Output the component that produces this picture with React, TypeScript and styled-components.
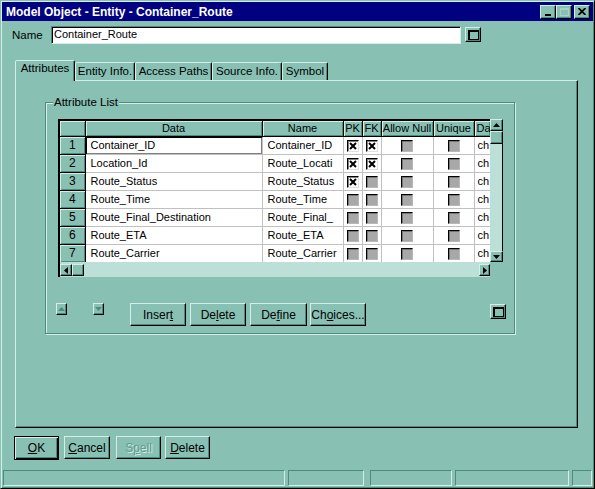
import React from "react";
import styled, { createGlobalStyle, css } from "styled-components";

const face = "#88c0b4";
const light = "#d4eee8";
const shadow = "#4e8a7e";
const dark = "#000";
const track = "#bcdfd7";
const gridLine = "#c0c0c0";

const GlobalStyle = createGlobalStyle`
  html, body { margin: 0; padding: 0; background: ${face}; }
  body {
    font-family: "Liberation Sans", Arial, sans-serif;
    font-size: 11px;
    color: #000;
  }
  * { box-sizing: border-box; }
`;

const raised = css`
  border: 1px solid;
  border-color: ${light} ${dark} ${dark} ${light};
  box-shadow: inset -1px -1px 0 ${shadow};
  background: ${face};
`;

const sunken = css`
  border: 1px solid;
  border-color: ${shadow} ${light} ${light} ${shadow};
  box-shadow: inset 1px 1px 0 ${dark};
`;

const Window = styled.div`
  width: 595px;
  height: 489px;
  border: 1px solid;
  border-color: ${face} ${dark} ${dark} ${face};
  box-shadow: inset 1px 1px 0 ${light}, inset -1px -1px 0 ${shadow};
  padding: 1px;
  display: flex;
  flex-direction: column;
  background: ${face};
`;

const TitleBar = styled.div`
  height: 19px;
  background: #000080;
  display: flex;
  align-items: center;
  padding: 0 3px 0 4px;
`;

const Title = styled.div`
  flex: 1;
  color: #fff;
  font-weight: bold;
  font-size: 12px;
`;

const Caption = styled.button<{ $disabled?: boolean; $gap?: boolean }>`
  ${raised};
  width: 16px;
  height: 14px;
  padding: 0;
  margin-left: ${(p) => (p.$gap ? "2px" : "0")};
  display: flex;
  align-items: center;
  justify-content: center;
`;

const NameRow = styled.div`
  height: 39px;
  display: flex;
  align-items: flex-start;
  padding: 5px 0 0 10px;
`;

const Label = styled.div`
  width: 39px;
  line-height: 18px;
  font-size: 11.5px;
`;

const TextInput = styled.div`
  ${sunken};
  width: 410px;
  height: 18px;
  background: #fff;
  padding-left: 2px;
  line-height: 15px;
`;

const BoxButton = styled.button<{ $left?: number; $top?: number }>`
  ${raised};
  width: 16px;
  height: 15px;
  padding: 0;
  margin-left: ${(p) => p.$left ?? 0}px;
  margin-top: ${(p) => p.$top ?? 0}px;
  display: flex;
  align-items: center;
  justify-content: center;
  &::after {
    content: "";
    width: 8px;
    height: 7px;
    border: 2px solid #000;
    border-right-width: 1px;
    border-bottom-width: 1px;
  }
`;

const TabStrip = styled.div`
  height: 20px;
  display: flex;
  align-items: flex-end;
  margin-left: 13px;
  position: relative;
  z-index: 1;
`;

const Tab = styled.div<{ $w: number; $active?: boolean }>`
  width: ${(p) => p.$w}px;
  height: ${(p) => (p.$active ? 21 : 18)}px;
  margin-bottom: ${(p) => (p.$active ? -1 : 0)}px;
  background: ${face};
  border: 1px solid;
  border-bottom: none;
  border-color: ${light} ${dark} transparent ${light};
  border-radius: 2px 2px 0 0;
  box-shadow: inset -1px 0 0 ${shadow};
  text-align: center;
  line-height: ${(p) => (p.$active ? 15 : 16)}px;
  font-size: 11.5px;
  white-space: nowrap;
`;

const Panel = styled.div`
  height: 348px;
  margin: 0 15px 0 13px;
  border: 1px solid;
  border-color: ${light} ${dark} ${dark} ${light};
  box-shadow: inset -1px -1px 0 ${shadow};
  padding: 15px 0 0 29px;
`;

const Group = styled.fieldset`
  width: 470px;
  margin: 0;
  padding: 10px 7px 7px 12px;
  border: 1px solid ${shadow};
  box-shadow: inset 1px 1px 0 ${light}, 1px 1px 0 ${light};
`;

const Legend = styled.legend`
  margin-left: -5px;
  padding: 0 1px;
  background: ${face};
  line-height: 13px;
  font-size: 11.5px;
`;

const GridFrame = styled.div`
  display: grid;
  grid-template-columns: 432px 13px;
  grid-template-rows: 143px 15px;
  width: 445px;
`;

const TableArea = styled.div`
  border-top: 2px solid ${dark};
  border-left: 2px solid ${dark};
  background: #fff;
  overflow: hidden;
`;

const Table = styled.table`
  border-collapse: collapse;
  table-layout: fixed;
  width: 430px;
`;

const Head = styled.th<{ $w: number; $left?: boolean }>`
  width: ${(p) => p.$w}px;
  height: 15px;
  padding: 0 0 0 ${(p) => (p.$left ? 2 : 0)}px;
  font-weight: normal;
  background: ${face};
  border-right: 1px solid ${dark};
  border-bottom: 1px solid ${dark};
  box-shadow: inset 1px 1px 0 ${light}, inset -1px -1px 0 ${shadow};
  text-align: ${(p) => (p.$left ? "left" : "center")};
  white-space: nowrap;
  overflow: hidden;
  line-height: 13px;
`;

const RowNum = styled.td`
  height: 18px;
  padding: 0;
  background: ${face};
  border-right: 1px solid ${dark};
  border-bottom: 1px solid ${dark};
  box-shadow: inset 1px 1px 0 ${light}, inset -1px -1px 0 ${shadow};
  text-align: center;
  font-size: 12px;
`;

const Cell = styled.td<{ $focus?: boolean; $center?: boolean; $pad?: number }>`
  height: 18px;
  padding: 0 0 0 ${(p) => (p.$center ? 0 : p.$pad ?? 5)}px;
  border-right: 1px solid ${gridLine};
  border-bottom: 1px solid ${gridLine};
  white-space: nowrap;
  overflow: hidden;
  text-align: ${(p) => (p.$center ? "center" : "left")};
  font-size: 11px;
  ${(p) =>
    p.$focus &&
    css`
      box-shadow: inset 1px 1px 0 ${dark}, inset -1px -1px 0 #808080;
    `}
`;

const Check = styled.span<{ $on?: boolean }>`
  display: inline-flex;
  align-items: center;
  justify-content: center;
  vertical-align: middle;
  width: 12px;
  height: 12px;
  border-top: 1px solid ${dark};
  border-left: 1px solid ${dark};
  border-right: 1px solid ${(p) => (p.$on ? "#e0e0e0" : "#b8b8b8")};
  border-bottom: 1px solid ${(p) => (p.$on ? "#e0e0e0" : "#b8b8b8")};
  background: ${(p) => (p.$on ? "#fff" : "#a8a8a8")};
  box-shadow: inset 1px 1px 0 ${(p) => (p.$on ? "#808080" : "#777")};
`;

const VScroll = styled.div`
  background: ${track};
  display: flex;
  flex-direction: column;
  justify-content: space-between;
  border-right: 1px solid ${dark};
`;

const HScroll = styled.div`
  background: ${track};
  border-left: 2px solid ${dark};
  display: flex;
  justify-content: space-between;
  padding-top: 2px;
`;

const ScrollEnd = styled.div`
  display: flex;
`;

const Corner = styled.div`
  background: ${face};
`;

const Arrow = styled.div<{ $w: number; $h: number }>`
  ${raised};
  width: ${(p) => p.$w}px;
  height: ${(p) => p.$h}px;
  display: flex;
  align-items: center;
  justify-content: center;
`;

const Thumb = styled.div<{ $w: number; $h: number }>`
  ${raised};
  width: ${(p) => p.$w}px;
  height: ${(p) => p.$h}px;
`;

const ButtonRow = styled.div`
  display: flex;
  align-items: flex-start;
  margin: 26px 0 0 -2px;
`;

const Mini = styled.button<{ $left: number }>`
  ${raised};
  width: 11px;
  height: 12px;
  padding: 0;
  margin-left: ${(p) => p.$left}px;
  display: flex;
  align-items: center;
  justify-content: center;
`;

const PushButton = styled.button<{ $w: number; $left: number; $default?: boolean; $disabled?: boolean }>`
  ${raised};
  width: ${(p) => p.$w}px;
  height: ${(p) => (p.$default ? 24 : 23)}px;
  margin-left: ${(p) => p.$left}px;
  padding: 0;
  font-family: inherit;
  font-size: 12px;
  color: ${(p) => (p.$disabled ? "#5f9a8e" : "#000")};
  text-shadow: ${(p) => (p.$disabled ? `1px 1px 0 ${light}` : "none")};
  ${(p) =>
    p.$default &&
    css`
      border: 1px solid ${dark};
      box-shadow: inset 1px 1px 0 ${light}, inset -1px -1px 0 ${dark}, inset -2px -2px 0 ${shadow};
    `}
`;

const Footer = styled.div`
  height: 42px;
  display: flex;
  align-items: flex-start;
  padding-top: 8px;
`;

const StatusBar = styled.div`
  height: 17px;
  display: flex;
  padding-left: 1px;
`;

const StatusPane = styled.div<{ $w: number; $left: number }>`
  width: ${(p) => p.$w}px;
  margin-left: ${(p) => p.$left}px;
  height: 16px;
  border: 1px solid;
  border-color: ${shadow} ${light} ${light} ${shadow};
`;

const Key = styled.span`
  text-decoration: underline;
`;

const TriUp = ({ c = "#000" }: { c?: string }) => (
  <svg width="7" height="4" viewBox="0 0 7 4">
    <path d="M0 4 L3.5 0 L7 4 Z" fill={c} />
  </svg>
);
const TriDown = ({ c = "#000" }: { c?: string }) => (
  <svg width="7" height="4" viewBox="0 0 7 4">
    <path d="M0 0 L3.5 4 L7 0 Z" fill={c} />
  </svg>
);
const TriLeft = () => (
  <svg width="4" height="7" viewBox="0 0 4 7">
    <path d="M4 0 L0 3.5 L4 7 Z" fill="#000" />
  </svg>
);
const TriRight = () => (
  <svg width="4" height="7" viewBox="0 0 4 7">
    <path d="M0 0 L4 3.5 L0 7 Z" fill="#000" />
  </svg>
);

const CheckBox = ({ on }: { on?: boolean }) => (
  <Check $on={on}>
    {on && (
      <svg width="8" height="8" viewBox="0 0 8 8">
        <path d="M1 1 L7 7 M7 1 L1 7" stroke="#000" strokeWidth="2" />
      </svg>
    )}
  </Check>
);

const rows = [
  { data: "Container_ID", name: "Container_ID", pk: true, fk: true },
  { data: "Location_Id", name: "Route_Locati", pk: true, fk: true },
  { data: "Route_Status", name: "Route_Status", pk: true, fk: false },
  { data: "Route_Time", name: "Route_Time", pk: false, fk: false },
  { data: "Route_Final_Destination", name: "Route_Final_", pk: false, fk: false },
  { data: "Route_ETA", name: "Route_ETA", pk: false, fk: false },
  { data: "Route_Carrier", name: "Route_Carrier", pk: false, fk: false },
];

const tabs = [
  { label: "Attributes", w: 60 },
  { label: "Entity Info.", w: 60 },
  { label: "Access Paths", w: 77 },
  { label: "Source Info.", w: 70 },
  { label: "Symbol", w: 46 },
];

export default function App() {
  return (
    <>
      <GlobalStyle />
      <Window>
        <TitleBar>
          <Title>Model Object - Entity - Container_Route</Title>
          <Caption>
            <svg width="8" height="8" viewBox="0 0 8 8">
              <rect x="1" y="6" width="6" height="2" fill="#000" />
            </svg>
          </Caption>
          <Caption>
            <svg width="9" height="8" viewBox="0 0 9 8">
              <rect x="0.5" y="0.5" width="8" height="7" fill="none" stroke="#a9cfc6" />
              <rect x="0" y="0" width="9" height="2" fill="#a9cfc6" />
            </svg>
          </Caption>
          <Caption $gap>
            <svg width="8" height="7" viewBox="0 0 8 7">
              <path d="M0.5 0 L7.5 7 M7.5 0 L0.5 7" stroke="#000" strokeWidth="1.8" />
            </svg>
          </Caption>
        </TitleBar>

        <NameRow>
          <Label>Name</Label>
          <TextInput>Container_Route</TextInput>
          <BoxButton $left={4} $top={1} />
        </NameRow>

        <TabStrip>
          {tabs.map((t, i) => (
            <Tab key={t.label} $w={t.w} $active={i === 0}>
              {t.label}
            </Tab>
          ))}
        </TabStrip>

        <Panel>
          <Group>
            <Legend>Attribute List</Legend>
            <GridFrame>
              <TableArea>
                <Table>
                  <thead>
                    <tr>
                      <Head $w={25} />
                      <Head $w={177}>Data</Head>
                      <Head $w={81}>Name</Head>
                      <Head $w={19}>PK</Head>
                      <Head $w={19}>FK</Head>
                      <Head $w={52}>Allow Null</Head>
                      <Head $w={41}>Unique</Head>
                      <Head $w={16} $left>
                        Da
                      </Head>
                    </tr>
                  </thead>
                  <tbody>
                    {rows.map((r, i) => (
                      <tr key={r.data}>
                        <RowNum>{i + 1}</RowNum>
                        <Cell $focus={i === 0}>{r.data}</Cell>
                        <Cell>{r.name}</Cell>
                        <Cell $center>
                          <CheckBox on={r.pk} />
                        </Cell>
                        <Cell $center>
                          <CheckBox on={r.fk} />
                        </Cell>
                        <Cell $center>
                          <CheckBox />
                        </Cell>
                        <Cell $center>
                          <CheckBox />
                        </Cell>
                        <Cell $pad={3}>ch</Cell>
                      </tr>
                    ))}
                  </tbody>
                </Table>
              </TableArea>
              <VScroll>
                <div>
                  <Arrow $w={13} $h={12}>
                    <TriUp />
                  </Arrow>
                  <Thumb $w={13} $h={13} />
                </div>
                <Arrow $w={13} $h={11}>
                  <TriDown />
                </Arrow>
              </VScroll>
              <HScroll>
                <ScrollEnd>
                  <Arrow $w={12} $h={12}>
                    <TriLeft />
                  </Arrow>
                  <Thumb $w={12} $h={12} />
                </ScrollEnd>
                <Arrow $w={11} $h={12}>
                  <TriRight />
                </Arrow>
              </HScroll>
              <Corner />
            </GridFrame>

            <ButtonRow>
              <Mini $left={0}>
                <TriUp c={shadow} />
              </Mini>
              <Mini $left={26}>
                <TriDown c={shadow} />
              </Mini>
              <PushButton $w={56} $left={26}>
                Inser<Key>t</Key>
              </PushButton>
              <PushButton $w={56} $left={4}>
                De<Key>l</Key>ete
              </PushButton>
              <PushButton $w={57} $left={4}>
                De<Key>f</Key>ine
              </PushButton>
              <PushButton $w={56} $left={3}>
                Ch<Key>o</Key>ices...
              </PushButton>
              <BoxButton $left={124} $top={1} />
            </ButtonRow>
          </Group>
        </Panel>

        <Footer>
          <PushButton $w={45} $left={12} $default>
            <Key>O</Key>K
          </PushButton>
          <PushButton $w={46} $left={5}>
            <Key>C</Key>ancel
          </PushButton>
          <PushButton $w={45} $left={6} $disabled>
            S<Key>p</Key>ell
          </PushButton>
          <PushButton $w={45} $left={4}>
            <Key>D</Key>elete
          </PushButton>
        </Footer>

        <StatusBar>
          <StatusPane $w={282} $left={0} />
          <StatusPane $w={76} $left={3} />
          <StatusPane $w={82} $left={6} />
          <StatusPane $w={114} $left={3} />
          <StatusPane $w={20} $left={3} />
        </StatusBar>
      </Window>
    </>
  );
}
